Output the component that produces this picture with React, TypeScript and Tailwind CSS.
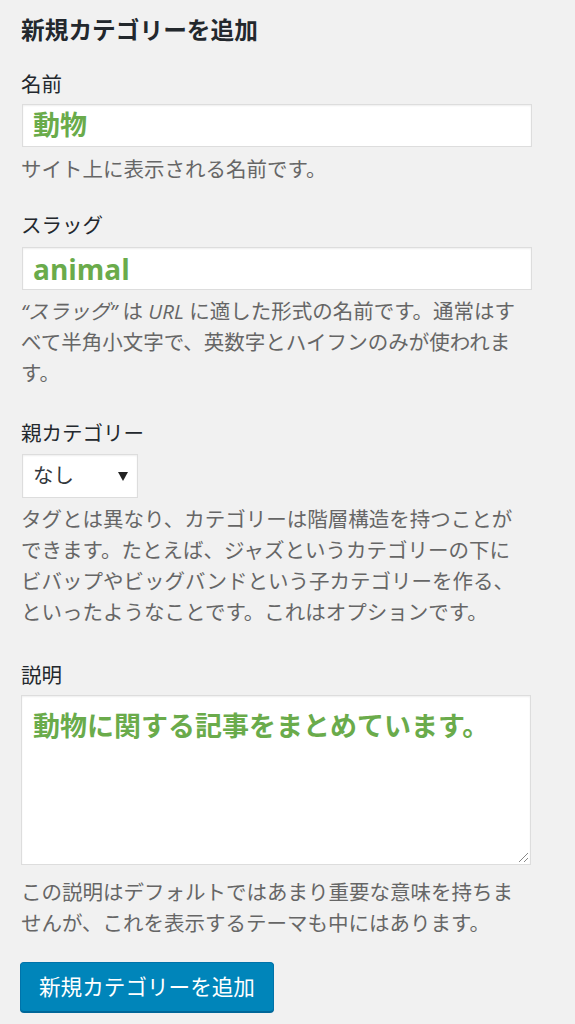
import React from "react";

// 新規カテゴリー追加フォーム (WordPress admin style)
export default function App() {
  const help = "text-[20.5px] leading-[31px] text-[#666]";
  const label = "block text-[20.5px] leading-[29px] text-[#23282d]";
  const field =
    "border border-[#ddd] bg-white shadow-[inset_0_1px_2px_rgba(0,0,0,0.07)]";

  return (
    <div className="min-h-screen bg-[#f1f1f1] px-[21px] pt-[13px] pb-4 font-['Open_Sans','Noto_Sans_CJK_JP',sans-serif] text-[#23282d]">
      <h2 className="text-[23.7px] font-bold leading-[34px]">新規カテゴリーを追加</h2>

      {/* 名前 */}
      <div className="mt-[23px]">
        <label className={label}>名前</label>
        <div
          className={`${field} mt-[5px] ml-px flex h-[43px] w-[510px] items-center px-[10px] text-[27px] font-bold text-[#6aab4b]`}
        >
          動物
        </div>
        <p className={`${help} mt-[6.5px]`}>サイト上に表示される名前です。</p>
      </div>

      {/* スラッグ */}
      <div className="mt-[26px]">
        <label className={label}>スラッグ</label>
        <div
          className={`${field} mt-[7.5px] ml-px flex h-[43px] w-[510px] items-center px-[10px] text-[28px] font-bold text-[#6aab4b]`}
        >
          animal
        </div>
        <p className={`${help} mt-[6px]`}>
          <em>“スラッグ”</em> は <em>URL</em> に適した形式の名前です。通常はす
          <br />
          べて半角小文字で、英数字とハイフンのみが使われま
          <br />
          す。
        </p>
      </div>

      {/* 親カテゴリー */}
      <div className="mt-[30px]">
        <label className={label}>親カテゴリー</label>
        <div
          className={`${field} mt-[5.5px] ml-px flex h-[44px] w-[116px] items-center justify-between pl-[10px] pr-[9px] text-[20.5px] text-[#32373c]`}
        >
          <span>なし</span>
          <svg width="10" height="9" viewBox="0 0 10 9" className="mt-[1px]">
            <path d="M0 0h10L5 9z" fill="#222" />
          </svg>
        </div>
        <p className={`${help} mt-[6.5px]`}>
          タグとは異なり、カテゴリーは階層構造を持つことが
          <br />
          できます。たとえば、ジャズというカテゴリーの下に
          <br />
          ビバップやビッグバンドという子カテゴリーを作る、
          <br />
          といったようなことです。これはオプションです。
        </p>
      </div>

      {/* 説明 */}
      <div className="mt-[33px]">
        <label className={label}>説明</label>
        <div className={`${field} relative mt-[4.5px] h-[170px] w-[510px] px-[11px] pt-[11px]`}>
          <div className="text-[27px] font-bold leading-[38px] text-[#6aab4b]">
            動物に関する記事をまとめています。
          </div>
          <svg
            width="12"
            height="12"
            viewBox="0 0 12 12"
            className="absolute right-[1px] bottom-[1px]"
          >
            <path d="M11 2L2 11M11 7L7 11" stroke="#888" strokeWidth="1" />
          </svg>
        </div>
        <p className={`${help} mt-[12.5px]`}>
          この説明はデフォルトではあまり重要な意味を持ちま
          <br />
          せんが、これを表示するテーマも中にはあります。
        </p>
      </div>

      <button
        type="button"
        className="-ml-px mt-[23px] h-[50px] w-[254px] rounded-[4px] border border-[#0073aa] border-b-[#006799] bg-[#0085ba] text-[21.6px] text-white shadow-[0_1px_0_#006799]"
      >
        新規カテゴリーを追加
      </button>
    </div>
  );
}
